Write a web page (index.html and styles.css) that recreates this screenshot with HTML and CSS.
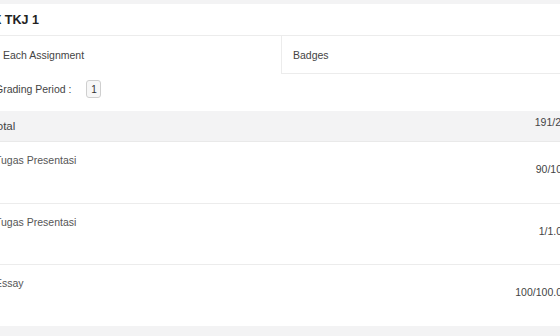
FILE: index.html
```html
<!DOCTYPE html>
<html lang="id">
<head>
<meta charset="UTF-8" />
<meta name="viewport" content="width=device-width, initial-scale=1" />
<title>Nilai - X TKJ 1</title>
<link rel="stylesheet" href="styles.css">
</head>
<body>

<div class="page">
  <header class="class-head">X TKJ 1</header>

  <nav class="tabs">
    <div class="tab active">Each Assignment</div>
    <div class="tab boxed">Badges</div>
  </nav>

  <div class="period">
    <span>Grading Period :</span>
    <span class="period-box">1</span>
  </div>

  <section class="grades">
    <div class="total-row">
      <div class="total-label">Total</div>
      <div class="total-value">191/2</div>
    </div>
    <div class="grade-row">
      <div class="grade-name">Tugas Presentasi</div>
      <div class="grade-value">90/10</div>
    </div>
    <div class="grade-row">
      <div class="grade-name">Tugas Presentasi</div>
      <div class="grade-value">1/1.0</div>
    </div>
    <div class="grade-row">
      <div class="grade-name">Essay</div>
      <div class="grade-value">100/100.0</div>
    </div>
  </section>
</div>

</body>
</html>
```

FILE: styles.css
```css
body {
  margin: 0; padding: 0;
  font-family: 'Liberation Sans', Arial, Helvetica, sans-serif;
  background: #f3f3f4;
  color: #555;
  overflow: hidden;
}
.page {
  width: 600px;
  margin-left: -20px;
  margin-top: 4px;
  background: #fff;
}
.class-head {
  height: 31px;
  border-bottom: 1px solid #ececec;
  padding: 0 13px;
  display: flex;
  align-items: center;
  font-size: 12.5px;
  font-weight: 700;
  color: #222;
}
.tabs {
  display: grid;
  grid-template-columns: 301px 1fr;
  height: 38px;
}
.tab {
  display: flex;
  align-items: center;
  padding-left: 23px;
  font-size: 10.5px;
  color: #444;
}
.tab.boxed {
  padding-left: 11px;
  border: 1px solid #ececec;
  border-top: none;
}
.period {
  height: 30px;
  padding: 0 0 7px 15px;
  display: flex;
  align-items: center;
  gap: 15px;
  font-size: 10.5px;
  color: #444;
}
.period-box {
  width: 13px;
  height: 16px;
  border: 1px solid #cfcfcf;
  border-radius: 3px;
  background: #f7f7f7;
  display: flex;
  align-items: center;
  justify-content: center;
  font-size: 10px;
  color: #333;
}
.total-row {
  height: 30px;
  background: #f3f3f4;
  border-bottom: 1px solid #e9e9e9;
  display: flex;
  justify-content: space-between;
  padding: 0 19px 0 11px;
}
.total-label {
  font-size: 11.5px;
  color: #444;
  line-height: 30px;
}
.total-value {
  font-size: 10.5px;
  color: #444;
  margin-top: 4px;
  line-height: 14px;
}
.grade-row {
  height: 48.5px;
  padding: 12px 18px 0 15px;
  display: flex;
  justify-content: space-between;
  align-items: flex-start;
  border-bottom: 1px solid #ececec;
}
.grade-row:last-child {
  border-bottom: none;
}
.grade-name {
  font-size: 10.5px;
  color: #555;
  line-height: 12px;
}
.grade-value {
  font-size: 10.5px;
  color: #444;
  margin-top: 8px;
  line-height: 14px;
}
```
